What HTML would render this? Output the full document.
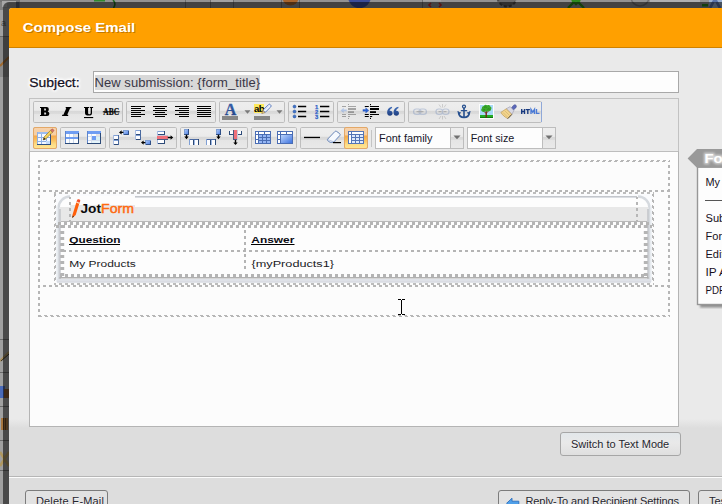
<!DOCTYPE html>
<html>
<head>
<meta charset="utf-8">
<title>Compose Email</title>
<style>
html,body{margin:0;padding:0;}
body{width:722px;height:504px;overflow:hidden;position:relative;background:#8b8b8b;font-family:"Liberation Sans",sans-serif;}
.abs{position:absolute;}
#frame{left:3px;top:2px;width:760px;height:560px;background:rgba(0,0,0,.54);border-radius:6px 0 0 0;}
#win{left:9px;top:8px;width:760px;height:560px;background:#eaeaea;border-radius:3px 0 0 0;overflow:hidden;}
#title{left:0;top:0;width:760px;height:39px;background:#ffa000;border-bottom:1px solid #cf8200;}
#title span{position:absolute;left:14px;top:11px;font-weight:bold;font-size:13px;color:#fff;text-shadow:1px 1px 1px rgba(120,70,0,.55);letter-spacing:.45px;white-space:nowrap;}
#lower{left:0;top:411px;width:760px;height:57px;background:linear-gradient(#eaeaea 0,#dddddd 9px,#dddddd 100%);}
#foot{left:0;top:468px;width:760px;height:60px;background:#dddddd;border-top:1px solid #b6b6b6;box-shadow:inset 0 1px 0 #fcfcfc;}
/* all below are in page coords */
#subjlbl{left:29px;top:74px;font-size:13px;color:#111;text-shadow:0 1px 0 #fff;letter-spacing:.55px;white-space:nowrap;}
#subj{left:93px;top:71px;width:584px;height:20px;border:1px solid #a8a8a8;background:#fdfdfd;}
#subj span{position:absolute;left:.5px;top:3px;height:15px;line-height:15px;padding:0;background:#d8d8d8;font-size:13px;color:#3a3646;white-space:nowrap;letter-spacing:.06px;}
#tb{left:29px;top:98px;width:648px;height:52px;border:1px solid #c2c2c2;background:#eaeaea;}
#ed{left:29px;top:151px;width:648px;height:274px;border:1px solid #b4b4b4;border-top:1px solid #bdbdbd;background:#fcfcfc;}
.grp{position:absolute;height:20px;border:1px solid #c6c6c6;border-radius:2px;background:linear-gradient(#ededed 0,#ececec 42%,#d9d9d9 46%,#dcdcdc 56%,#e6e6e6 60%,#e8e8e8 100%);}
.btn{position:absolute;width:22px;height:22px;}
.btn svg{position:absolute;left:1px;top:1px;}
</style>
</head>
<body>
<svg class="abs" style="left:0;top:0" width="722" height="504" viewBox="0 0 722 504">
<rect x="0" y="0" width="722" height="504" fill="#a0a0a0"/><rect x="0" y="0" width="722" height="8" fill="#929292"/>
<rect x="0" y="0" width="20" height="2" fill="#747474"/>
<rect x="0" y="2" width="3" height="8" fill="#808080"/>
<rect x="2" y="1" width="14" height="1.500" fill="#a8a8a8"/><rect x="2" y="1" width="5" height="6" fill="#a8a8a8"/><rect x="16" y="2" width="3.500" height="6" fill="#5a6070"/><text x="1" y="26" font-family="Liberation Sans, sans-serif" font-size="9" fill="#555">a</text>
<rect x="0" y="37" width="9" height="40" fill="#8a8a8a"/>
<!-- top strip bits -->
<rect x="94" y="0" width="11" height="1.500" fill="#2f8a2f"/>
<path d="M113 0c2.500 2.500 2.500 5 .5 8" stroke="#1f6a1f" stroke-width="1.600" fill="none"/>
<rect x="211" y="0" width="22" height="2" fill="#a2a2a2"/>
<rect x="422" y="0" width="19" height="1.500" fill="#a0a0a0"/>
<rect x="650" y="0" width="50" height="2" fill="#b0b0b0"/>
<g stroke="#6e6e6e" stroke-width="1"><path d="M185.500 0v8M210.500 0v8M233.500 0v8M281.500 0v8M299.500 0v8M422.500 0v8"/></g>
<circle cx="290.500" cy="-2.500" r="8" fill="#a8642c"/>
<circle cx="359.500" cy="-3.500" r="11.500" fill="#3c4c98"/>
<path d="M431 3l-2 2 2 2M439 3l2 2-2 2" stroke="#b83030" stroke-width="1.600" fill="none"/>
<circle cx="507" cy="-3" r="9.500" fill="#6a6a6a" stroke="#4a4a4a" stroke-width="2" stroke-dasharray="3 2"/>
<path d="M568 8l8-8 8 8M572 0l4 4 4-4" stroke="#2c8a1c" stroke-width="2.400" fill="none"/>
<circle cx="640" cy="-3" r="9" fill="none" stroke="#707070" stroke-width="1.500"/>
<rect x="702" y="4" width="6" height="2.500" fill="#2c8a1c"/>
<rect x="709" y="0" width="13" height="8" fill="#9ab0d0"/><path d="M710 8l5-9 5 9" stroke="#5a72a8" stroke-width="2.600" fill="none"/>
<!-- left strip bits -->
<path d="M0 66l9-9" stroke="#a06a30" stroke-width="2"/>
<path d="M0 361l9-9" stroke="#a89060" stroke-width="2.200"/>
<path d="M1 361l8-7" stroke="#3a3020" stroke-width="1"/>
<rect x="0" y="386" width="5" height="12" fill="#4a6ab8"/><rect x="4" y="389" width="5" height="9" fill="#8a5a30"/>
<rect x="1" y="418" width="7" height="12" fill="#a87840"/><path d="M3.500 418v12M5.500 418v12" stroke="#5a3a20" stroke-width=".8"/>
<path d="M0 452l9 14M0 466l9-14" stroke="#b09860" stroke-width="2.600"/>
<g stroke="#6a6a6a"><path d="M0 36.500h9M0 339.500h9M0 372.500h9M0 406.500h9M0 440.500h9M0 470.500h9"/></g>
</svg>

<div class="abs" id="frame"></div>
<div class="abs" id="win">
  <div class="abs" id="title"><svg style="position:absolute;left:0;top:0" width="200" height="39" viewBox="0 0 200 39"><text x="14.800" y="24.900" font-family="Liberation Sans, sans-serif" font-weight="bold" font-size="13.400" fill="#9a5a00" fill-opacity=".6" textLength="112.500" lengthAdjust="spacingAndGlyphs">Compose Email</text><text x="13.800" y="23.900" font-family="Liberation Sans, sans-serif" font-weight="bold" font-size="13.400" fill="#fff" textLength="112.500" lengthAdjust="spacingAndGlyphs">Compose Email</text></svg></div>
  <div class="abs" id="lower"></div>
  <div class="abs" id="foot"></div>
</div>
<svg class="abs" style="left:24px;top:70px" width="64" height="26" viewBox="24 70 64 26"><defs><filter id="wg" x="-20%" y="-30%" width="140%" height="160%"><feGaussianBlur stdDeviation=".8"/></filter></defs><text x="29.300" y="86.700" font-family="Liberation Sans, sans-serif" font-size="12.300" fill="#fff" stroke="#fff" stroke-width="2.400" filter="url(#wg)" textLength="50.300" lengthAdjust="spacingAndGlyphs">Subject:</text><text x="29.300" y="86.700" font-family="Liberation Sans, sans-serif" font-size="12.300" fill="#14101e" stroke="#14101e" stroke-width=".25" textLength="50.300" lengthAdjust="spacingAndGlyphs">Subject:</text></svg>
<div class="abs" id="subj"><span>New submission: {form_title}</span></div>
<div class="abs" id="tb"></div>
<div class="abs" id="ed"></div>
<svg class="abs" style="left:29px;top:98px" width="650" height="54" viewBox="29 98 650 54">
<defs>
<linearGradient id="gb" x1="0" y1="0" x2="0" y2="1">
<stop offset="0" stop-color="#eeeeee"/><stop offset=".42" stop-color="#ebebeb"/><stop offset=".46" stop-color="#d7d7d7"/><stop offset=".57" stop-color="#dbdbdb"/><stop offset=".62" stop-color="#e5e5e5"/><stop offset="1" stop-color="#e9e9e9"/>
</linearGradient>
<linearGradient id="ga" x1="0" y1="0" x2="0" y2="1">
<stop offset="0" stop-color="#f6d2ad"/><stop offset=".36" stop-color="#f8cf9f"/><stop offset=".40" stop-color="#f5a94a"/><stop offset=".60" stop-color="#f9bf5e"/><stop offset=".80" stop-color="#fddc85"/><stop offset="1" stop-color="#ffe694"/>
</linearGradient>
<linearGradient id="bl" x1="0" y1="0" x2="0" y2="1"><stop offset="0" stop-color="#3f6cb8"/><stop offset="1" stop-color="#1f3f80"/></linearGradient>
<linearGradient id="bc" x1="0" y1="0" x2="1" y2="1"><stop offset="0" stop-color="#bcd4fb"/><stop offset="1" stop-color="#3f74e0"/></linearGradient>
</defs>
<!-- groups row 1 -->
<g fill="url(#gb)" stroke="#bebebe">
<rect x="33.5" y="101.5" width="89" height="21" rx="1.200"/>
<rect x="126.5" y="101.5" width="89" height="21" rx="1.200"/>
<rect x="219.5" y="101.5" width="65" height="21" rx="1.200"/>
<rect x="288.5" y="101.5" width="45" height="21" rx="1.200"/>
<rect x="337.5" y="101.5" width="67" height="21" rx="1.200"/>
<rect x="408.5" y="101.5" width="133" height="21" rx="1.200"/>
<!-- row 2 -->
<rect x="33.5" y="127.5" width="23" height="21" rx="1.200"/>
<rect x="60.5" y="127.5" width="45" height="21" rx="1.200"/>
<rect x="109.5" y="127.5" width="67" height="21" rx="1.200"/>
<rect x="180.5" y="127.5" width="67" height="21" rx="1.200"/>
<rect x="251.5" y="127.5" width="45" height="21" rx="1.200"/>
<rect x="300.5" y="127.5" width="67" height="21" rx="1.200"/>
</g>
<!-- active buttons -->
<rect x="33.5" y="127.5" width="23" height="21" rx="1.5" fill="url(#ga)" stroke="#e3a868"/>
<rect x="344.5" y="127.5" width="23" height="21" rx="1.5" fill="url(#ga)" stroke="#e3a868"/>
<line x1="541.5" y1="102" x2="541.5" y2="122" stroke="#8fa8d8"/>
<line x1="371.5" y1="130" x2="371.5" y2="147" stroke="#c4c4c4"/>
<!-- selects -->
<g>
<rect x="375.5" y="127.5" width="88" height="21" fill="#fdfdfd" stroke="#bdbdbd"/>
<rect x="451" y="128" width="12" height="20" fill="url(#gb)"/>
<line x1="450.5" y1="128" x2="450.5" y2="148" stroke="#bdbdbd"/>
<path d="M453.5 135.5h7l-3.5 3.8z" fill="#707070"/>
<rect x="467.5" y="127.5" width="88" height="21" fill="#fdfdfd" stroke="#bdbdbd"/>
<rect x="543" y="128" width="12" height="20" fill="url(#gb)"/>
<line x1="542.5" y1="128" x2="542.5" y2="148" stroke="#bdbdbd"/>
<path d="M545.5 135.5h7l-3.5 3.8z" fill="#707070"/>
<text x="379" y="141.800" font-family="Liberation Sans, sans-serif" font-size="11.500" fill="#16162a" textLength="53.500" lengthAdjust="spacingAndGlyphs">Font family</text>
<text x="470.800" y="141.800" font-family="Liberation Sans, sans-serif" font-size="11.500" fill="#16162a" textLength="43.500" lengthAdjust="spacingAndGlyphs">Font size</text>
</g>
<!-- B I U ABC -->
<path fill-rule="evenodd" d="M40 107H46.600Q48.800 107 48.800 109.100V109.600Q48.800 111.100 47.600 111.500Q49.300 111.900 49.300 113.300V113.900Q49.300 116 47 116H40V114.900H41V108.100H40ZM44.200 108.500V110.600H45.500Q45.900 110.600 45.900 110.100V109Q45.900 108.500 45.500 108.500ZM44.200 112.400V114.500H45.700Q46.100 114.500 46.100 114V112.900Q46.100 112.400 45.700 112.400Z" fill="#000"/>
<path d="M65.700 107H71.300V108.200H70.100L67.200 114.800H68.200V116H62.100V114.800H63.400L66.300 108.200H65.700Z" fill="#000"/>
<path d="M84 107H89V108.100H88.100V113Q88.100 114.300 89.300 114.300Q90.700 114.300 90.700 113V108.100H89.800V107H93.100V108.100H92V113Q92 115.600 88.800 115.600Q85 115.600 85 113V108.100H84Z" fill="#000"/>
<rect x="84" y="117" width="9.200" height="1.100" fill="#000"/>
<text x="103.300" y="114.900" font-family="Liberation Serif, serif" font-weight="bold" font-size="9.500" fill="#000" stroke="#000" stroke-width=".2" textLength="15.800" lengthAdjust="spacingAndGlyphs">ABC</text>
<rect x="102.800" y="111.300" width="16.800" height="1" fill="#000"/>
<!-- align -->
<g fill="#000" shape-rendering="crispEdges">
<path d="M131 106h14v1h-14zM131 108h10v1h-10zM131 110h14v1h-14zM131 112h10v1h-10zM131 114h14v1h-14zM131 116h10v1h-10z"/>
<path d="M153 106h14v1h-14zM155 108h10v1h-10zM153 110h14v1h-14zM155 112h10v1h-10zM153 114h14v1h-14zM155 116h10v1h-10z"/>
<path d="M175 106h14v1h-14zM179 108h10v1h-10zM175 110h14v1h-14zM179 112h10v1h-10zM175 114h14v1h-14zM179 116h10v1h-10z"/>
<path d="M197 106h14v1h-14zM197 108h14v1h-14zM197 110h14v1h-14zM197 112h14v1h-14zM197 114h14v1h-14zM197 116h14v1h-14z"/>
</g>
<!-- forecolor -->
<text x="230.5" y="114.6" text-anchor="middle" font-family="Liberation Serif, serif" font-weight="bold" font-size="16" fill="url(#bl)" stroke="#2c509a" stroke-width=".3">A</text>
<rect x="222" y="116" width="16" height="4" fill="#878787"/>
<path d="M244.5 110.3h6l-3 3.4z" fill="#7a7a7a"/>
<!-- backcolor -->
<rect x="254" y="104" width="10" height="9" fill="#fdea5c"/>
<text x="254" y="112" font-family="Liberation Sans, sans-serif" font-weight="bold" font-size="9.600" letter-spacing="-.7" fill="#000">ab</text>
<g transform="translate(1.100 -.100) rotate(45 265.200 109.200)">
<rect x="263.600" y="103.200" width="3.200" height="9.400" rx="1.300" fill="#f2f7ff" stroke="#5878bc" stroke-width=".9"/>
<path d="M263.700 112.600h3l-1.500 3z" fill="#ecd29a" stroke="#8a6a30" stroke-width=".5"/>
<path d="M264.600 104.500v7" stroke="#c4d6f4" stroke-width=".9"/>
</g>
<rect x="254" y="116" width="16" height="4" fill="#878787"/>
<path d="M276.5 110.3h6l-3 3.4z" fill="#7a7a7a"/>
<!-- bullist -->
<g fill="#3f72c8" stroke="#24509c" stroke-width=".5">
<circle cx="294.5" cy="106.6" r="1.5"/><circle cx="294.5" cy="111.5" r="1.5"/><circle cx="294.5" cy="116.4" r="1.5"/>
</g>
<g stroke="#000" stroke-width="1.5">
<path d="M298 106.6h8.2M298 111.5h8.2M298 116.4h8.2"/>
<path d="M320 106.6h9.3M320 111.5h9.3M320 116.4h9.3"/>
</g>
<!-- numlist -->
<g font-family="Liberation Sans, sans-serif" font-weight="bold" font-size="5.800" fill="#2f62c8" stroke="#2f62c8" stroke-width=".25" text-anchor="middle">
<text x="316.600" y="108.700">1</text><text x="316.600" y="113.600">2</text><text x="316.600" y="118.500">3</text>
</g>
<!-- outdent (disabled) -->
<g opacity=".30" transform="translate(-1 0)">
<path d="M349.5 104v1M349.5 118v1" stroke="#000"/>
<path d="M343 106.5h4M349 106.5h8" stroke="#000" stroke-width="1"/>
<rect x="349" y="108" width="8" height="2" fill="#000"/>
<rect x="349" y="111.2" width="6" height="1.8" fill="#000"/>
<path d="M343 114.5h4M349 114.5h8M343 116.5h4M349 116.5h2" stroke="#000" stroke-width="1"/>
<path d="M341.5 110.4l3.2-2.6v1.7h3v1.8h-3v1.7z" fill="#3b78e0"/>
</g>
<!-- indent -->
<g>
<path d="M370.5 104v1.2M370.5 117.8v1.2" stroke="#000"/>
<path d="M364.8 106.5h4M370 106.5h9" stroke="#000" stroke-width="1"/>
<rect x="370" y="108" width="9" height="2" fill="#000"/>
<rect x="370" y="111.2" width="6" height="1.8" fill="#000"/>
<path d="M364.8 114.5h4M370 114.5h9M364.8 116.5h4M370 116.5h2.2" stroke="#000" stroke-width="1"/>
<path d="M368.9 110.4l-3.2-2.7v1.8h-2.8v1.8h2.8v1.8z" fill="#2a62d4" stroke="#1f4cae" stroke-width=".3"/>
</g>
<!-- blockquote -->
<g fill="url(#bl)">
<path d="M391.8 106.8c-3 .7-4.7 2.800-4.700 5.6 0 2 1.200 3.300 2.900 3.300 1.500 0 2.600-1.100 2.600-2.500 0-1.400-1-2.400-2.400-2.400-.2 0-.4 0-.6.100.2-1.300 1.100-2.300 2.600-3z"/>
<path d="M398.200 106.800c-3 .7-4.700 2.800-4.700 5.600 0 2 1.200 3.300 2.900 3.300 1.500 0 2.600-1.100 2.600-2.500 0-1.400-1-2.400-2.400-2.400-.2 0-.4 0-.6.100.2-1.300 1.100-2.300 2.600-3z"/>
</g>
<!-- link (disabled) -->
<g opacity=".30" fill="none" stroke="#5a78b0" stroke-width="1.200">
<rect x="413.6" y="109" width="7.4" height="5.4" rx="2.600"/>
<rect x="419" y="109" width="7.4" height="5.4" rx="2.600"/>
<path d="M416.500 111.700h7" stroke="#333" stroke-width="1"/>
</g>
<!-- unlink (disabled) -->
<g opacity=".30" fill="none" stroke="#5a78b0" stroke-width="1.200">
<rect x="436" y="109" width="6.6" height="5.4" rx="2.600"/>
<rect x="442.4" y="109" width="6.600" height="5.400" rx="2.600"/>
<path d="M438.500 111.700h3M443.500 111.700h3" stroke="#333" stroke-width="1"/>
<path d="M442.500 104v3.500M439 104.500l2 3M446 104.500l-2 3M442.500 119.500v-3.500M439 119l2-3M446 119l-2-3" stroke="#666" stroke-width=".8"/>
</g>
<!-- anchor -->
<g fill="none" stroke="#27508f" stroke-width="1.6" stroke-linecap="round">
<circle cx="464" cy="106.600" r="1.500" stroke-width="1.300"/>
<path d="M464 108.300v8.700"/>
<path d="M461.300 110.600h5.400" stroke-width="1.200"/>
<path d="M458.700 112.800c.3 3 2.400 4.600 5.300 4.600s5-1.600 5.300-4.600" stroke-width="1.800"/>
<path d="M458 111.400l.700 2.600 1.900-1.200M470 111.400l-.7 2.600-1.900-1.200" stroke-width="1" fill="#27508f"/>
</g>
<!-- image -->
<g>
<rect x="479" y="104" width="15" height="15" fill="#fdfdfd"/>
<rect x="480" y="105" width="13" height="10" fill="#a9daf8"/>
<rect x="480" y="115" width="13" height="3" fill="#25ad25"/>
<rect x="480" y="117" width="13" height="1" fill="#127a12"/>
<path d="M486.200 111v6.500" stroke="#7a1a10" stroke-width="1.300"/>
<path d="M486.300 113.500l-2.300-2M486.300 113l2.500-2" stroke="#7a1a10" stroke-width=".8"/>
<path d="M482 108.200c-1.200 1-1 2.800.3 3.200 1 .9 2.300.6 2.900-.2 1.300.7 2.500.6 3.200-.2 1.500.5 2.800-.4 2.700-1.700.8-1.200.2-2.600-1-2.800-.3-1.300-1.800-1.800-2.900-1.100-1-.9-2.700-.7-3.300.5-1.200-.1-2.200 1-1.900 2.300z" fill="#3aa82a"/>
<path d="M484 107.500c.8-.8 2-.8 2.700-.1M487.500 109.200c.8-.5 1.700-.4 2.300.2M483.200 110c.6-.4 1.300-.4 1.800 0" stroke="#1c7a18" stroke-width=".7" fill="none"/>
</g>
<!-- cleanup brush -->
<g>
<path d="M510.800 108.600l2.600-3.200c.7-.8 1.800-.9 2.500-.2.700.7.700 1.800 0 2.500l-3 2.900z" fill="#5b68b8" stroke="#3b478f" stroke-width=".5"/>
<path d="M506.200 108.800l4-2.200 3.700 3.800-2 4z" fill="#d8d8e4" stroke="#8a8aa0" stroke-width=".5"/>
<path d="M506.200 108.800l5.700 5.600-4 4.200c-2.800-1.200-5.600-3.600-7-6.200z" fill="#f1d48e" stroke="#b8924a" stroke-width=".6"/>
<path d="M503 112.500l4.800 4.800M504.800 110.800l4.800 4.800" stroke="#d4ae62" stroke-width=".6"/>
<path d="M507.800 118.600l4-4.200" stroke="#3a3a3a" stroke-width=".8"/>
</g>
<!-- html -->
<g fill="none" stroke-width="1.350" stroke-linejoin="miter">
<path d="M521.700 109v5M524.500 109v5M521.700 111.500h2.800M525.700 109.650h4.200M527.800 109v5" stroke="#17397f"/>
<path d="M531 114v-4.600l1.750 2.800 1.750-2.800v4.600M536.500 109v4.350h3" stroke="#4a7ad6"/>
</g>

<!-- table (active) with pencil -->
<g shape-rendering="crispEdges">
<rect x="37" y="132" width="14" height="13" fill="#f4f8ff"/>
<rect x="37" y="132" width="14" height="2" fill="#9cbcf0"/>
<path d="M37 132v13M41.500 134v11M46.500 134v11M37 137.500h14M37 141.500h14" stroke="#8fb0e4" fill="none"/>
<path d="M37 144.500h14M50.500 132v13" stroke="#2f4f82" fill="none"/>
<rect x="46" y="141" width="4" height="3" fill="#c6dcf8"/>
</g>
<path d="M50.600 130.300l1.900 1.800-6.700 6.800-2.600 1 .8-2.800z" fill="#f6d35a" stroke="#8a6a1a" stroke-width=".6"/>
<path d="M50.600 130.300l.9-.9c.5-.5 1.200-.5 1.700 0l.3.300c.5.500.5 1.200 0 1.600l-.9.900z" fill="#d8766a" stroke="#9a4a40" stroke-width=".5"/>
<path d="M43.200 139.900l.7-2.500 1.900 1.800z" fill="#222"/>
<!-- row props -->
<g shape-rendering="crispEdges">
<rect x="65" y="131" width="14" height="13" fill="#fbfdff"/>
<rect x="65" y="131" width="14" height="3" fill="#6f9df2"/>
<rect x="65" y="137" width="13" height="2" fill="#6f9df2"/>
<path d="M65.500 131v13" stroke="#5f86cc" fill="none"/>
<path d="M69.500 134v3M73.500 134v3M69.500 139v4M73.500 139v4" stroke="#c9d6ea" fill="none"/>
<path d="M65 143.500h14M78.500 133v11" stroke="#2c4a78" fill="none"/>
<rect x="74" y="134" width="4" height="3" fill="#e4e4e4"/>
</g>
<!-- cell props -->
<g shape-rendering="crispEdges">
<rect x="87" y="131" width="14" height="13" fill="#fbfdff"/>
<rect x="87" y="131" width="14" height="3" fill="#6f9df2"/>
<path d="M87.500 131v13" stroke="#5f86cc" fill="none"/>
<path d="M91.500 134v9M96.500 134v9M88 136.500h12M88 140.500h12" stroke="#d4deee" fill="none"/>
<rect x="92" y="136" width="4" height="4" fill="#6f9df2"/>
<rect x="96" y="137" width="4" height="3" fill="#d9f0f4"/>
<rect x="92" y="141" width="8" height="2" fill="#e4f4fa"/>
<rect x="96" y="134" width="4" height="2" fill="#e2e2e2"/>
<path d="M87 143.500h14M100.500 133v11" stroke="#2c4a78" fill="none"/>
</g>
<!-- row before -->
<g shape-rendering="crispEdges">
<rect x="113" y="135" width="6" height="5" fill="#fdfdff"/><rect x="113" y="140" width="6" height="5" fill="#fdfdff"/>
<path d="M113 135.500h6M113 140.500h6" stroke="#7f9fd4" fill="none"/>
<path d="M113 139.500h6M113 144.500h6" stroke="#2c4a78" fill="none"/><path d="M118.500 135v10" stroke="#4a6aa0" fill="none"/>
<path d="M113.500 135v10" stroke="#a9bce0" fill="none"/>
<rect x="123" y="130" width="6" height="5" fill="url(#bc)" stroke="none"/>
<path d="M123 134.500h6M128.500 130v5" stroke="#2f4f86" fill="none"/>
<path d="M123 130.500h6M123.500 130v5" stroke="#7f9fd4" fill="none"/>
</g>
<path d="M119 132.400l2.600-2.200v1.500h1.800v1.400h-1.800v1.500z" fill="#000"/>
<!-- row after -->
<g shape-rendering="crispEdges">
<rect x="135" y="130" width="6" height="5" fill="#fdfdff"/><rect x="135" y="135" width="6" height="5" fill="#fdfdff"/>
<path d="M135 130.500h6M135 135.500h6" stroke="#7f9fd4" fill="none"/>
<path d="M135 134.500h6M135 139.500h6" stroke="#2c4a78" fill="none"/><path d="M140.500 130v10" stroke="#4a6aa0" fill="none"/>
<path d="M135.500 130v10" stroke="#a9bce0" fill="none"/>
<rect x="145" y="140" width="6" height="5" fill="url(#bc)"/>
<path d="M145 144.500h6M150.500 140v5" stroke="#2f4f86" fill="none"/>
<path d="M145 140.500h6M145.500 140v5" stroke="#7f9fd4" fill="none"/>
</g>
<path d="M141 142.600l2.600-2.200v1.500h1.800v1.400h-1.800v1.500z" fill="#000"/>
<!-- delete row -->
<g shape-rendering="crispEdges">
<rect x="157" y="131" width="8" height="4" fill="#fdfdff"/><rect x="157" y="140" width="8" height="4" fill="#fdfdff"/>
<path d="M157 131.500h8M157 139.500h8" stroke="#7f9fd4" fill="none"/>
<path d="M157 134.500h8M157 143.500h8M164.500 131v4M164.500 140v4" stroke="#2c4a78" fill="none"/>
<path d="M157.500 131v13" stroke="#a9bce0" fill="none"/>
<rect x="157" y="136" width="11" height="3" fill="#f0707a"/>
<rect x="157" y="135" width="11" height="1" fill="#c8c8d8"/>
<rect x="157" y="139" width="11" height="1" fill="#4a5a80"/>
</g>
<path d="M173.200 137.500l-2.600-2.200v1.500h-2.800v1.400h2.800v1.500z" fill="#000"/>
<!-- col before -->
<g shape-rendering="crispEdges">
<rect x="184" y="129" width="5" height="6" fill="url(#bc)"/>
<path d="M184.500 129v6M184 129.500h5" stroke="#7f9fd4" fill="none"/>
<path d="M188.500 129v6M184 134.500h5" stroke="#2f4f86" fill="none"/>
<rect x="189" y="139" width="10" height="6" fill="#fdfdff"/>
<path d="M189 139.500h10" stroke="#4a68a0" fill="none"/>
<path d="M189.500 139v6" stroke="#7f9fd4" fill="none"/>
<path d="M193.500 140v5M198.500 139v6" stroke="#2c4a78" fill="none"/>
<path d="M194.500 140v5" stroke="#9db8e4" fill="none"/>
</g>
<path d="M186.500 139.200l-2.200-2.600h1.500v-1.800h1.400v1.800h1.500z" fill="#000"/>
<!-- col after -->
<g shape-rendering="crispEdges">
<rect x="216" y="129" width="5" height="6" fill="url(#bc)"/>
<path d="M216.500 129v6M216 129.500h5" stroke="#7f9fd4" fill="none"/>
<path d="M220.500 129v6M216 134.500h5" stroke="#2f4f86" fill="none"/>
<rect x="206" y="139" width="10" height="6" fill="#fdfdff"/>
<path d="M206 139.500h10" stroke="#4a68a0" fill="none"/>
<path d="M206.500 139v6" stroke="#7f9fd4" fill="none"/>
<path d="M210.500 140v5M215.500 139v6" stroke="#2c4a78" fill="none"/>
<path d="M211.500 140v5" stroke="#9db8e4" fill="none"/>
</g>
<path d="M218.500 139.200l-2.200-2.600h1.500v-1.800h1.400v1.800h1.500z" fill="#000"/>
<!-- delete col -->
<g shape-rendering="crispEdges">
<rect x="229" y="131" width="13" height="4" fill="#fdfdff"/>
<path d="M229.500 131v4M229 134.500h4M238 134.500h4" stroke="#2c4a78" fill="none"/>
<path d="M241.500 131v4" stroke="#2c4a78" fill="none"/>
<rect x="234" y="130" width="3" height="10" fill="#f0707a"/>
<path d="M233.500 130v10M233 139.500h5" stroke="#4a5a80" fill="none"/>
<path d="M237.500 130v10" stroke="#c8c8d8" fill="none"/>
</g>
<path d="M235.500 145l-2.200-2.600h1.500v-2.400h1.400v2.400h1.500z" fill="#000"/>
<!-- split cells -->
<g shape-rendering="crispEdges">
<rect x="255" y="131" width="16" height="13" fill="#4a6db4"/>
<rect x="256" y="132" width="2" height="2" fill="#fff"/><rect x="259" y="132" width="5" height="2" fill="#fff"/><rect x="265" y="132" width="5" height="2" fill="#fff"/>
<rect x="256" y="135" width="2" height="4" fill="#fff"/><rect x="256" y="140" width="2" height="3" fill="#fff"/>
<g fill="#95b6f4">
<rect x="259" y="135" width="3" height="2"/><rect x="263" y="135" width="3" height="2"/><rect x="267" y="135" width="3" height="2"/>
<rect x="259" y="138" width="3" height="2"/><rect x="263" y="138" width="3" height="2"/><rect x="267" y="138" width="3" height="2"/>
<rect x="259" y="141" width="3" height="2"/><rect x="263" y="141" width="3" height="2"/><rect x="267" y="141" width="3" height="2"/>
</g>
</g>
<!-- merge cells -->
<g shape-rendering="crispEdges">
<rect x="277" y="131" width="16" height="13" fill="#4a6db4"/>
<rect x="278" y="132" width="2" height="2" fill="#fff"/><rect x="281" y="132" width="5" height="2" fill="#fff"/><rect x="287" y="132" width="5" height="2" fill="#fff"/>
<rect x="278" y="135" width="2" height="4" fill="#fff"/><rect x="278" y="140" width="2" height="3" fill="#fff"/>
<rect x="281" y="135" width="11" height="8" fill="url(#bc)"/>
</g>
<!-- hr -->
<rect x="304" y="136.800" width="16" height="1.300" fill="#000"/>
<!-- eraser -->
<path d="M327.600 139.200l7.200-7.600c.5-.5 1.200-.6 1.800-.2l3 2.200c.6.500.7 1.300.2 1.900l-6.200 6.800h-3.600l-2.300-1.700c-.4-.4-.5-1-.1-1.400z" fill="#f6f9fe" stroke="#5877ae" stroke-width=".9"/>
<path d="M327.800 139.600l6.600 2.400 5.400-6.400" fill="none" stroke="#9db2d8" stroke-width=".7"/>
<rect x="333" y="142" width="8" height="1.200" fill="#000"/>
<!-- visualaid -->
<g shape-rendering="crispEdges">
<rect x="348" y="131" width="16" height="13" fill="#5575b6"/>
<rect x="349" y="132" width="2" height="2" fill="#fff"/><rect x="352" y="132" width="11" height="2" fill="#fff"/>
<rect x="349" y="135" width="2" height="8" fill="#fff"/>
<g fill="#dfe9fb">
<rect x="352" y="135" width="3" height="2"/><rect x="356" y="135" width="3" height="2"/><rect x="360" y="135" width="3" height="2"/>
<rect x="352" y="138" width="3" height="2"/><rect x="356" y="138" width="3" height="2"/><rect x="360" y="138" width="3" height="2"/>
<rect x="352" y="141" width="3" height="2"/><rect x="356" y="141" width="3" height="2"/><rect x="360" y="141" width="3" height="2"/>
</g>
</g>

</svg>

<svg class="abs" style="left:30px;top:153px" width="648" height="274" viewBox="30 153 648 274">
<defs>
<linearGradient id="hb" x1="0" y1="0" x2="1" y2="0"><stop offset="0" stop-color="#dfe3e9"/><stop offset="1" stop-color="#b9bdc4"/></linearGradient>
<linearGradient id="hbr" x1="1" y1="0" x2="0" y2="0"><stop offset="0" stop-color="#dfe3e9"/><stop offset="1" stop-color="#b9bdc4"/></linearGradient>
</defs>
<!-- outer table -->
<g stroke="#b6b6b6" stroke-width="1" stroke-dasharray="3 3" fill="none">
<path d="M38 160.500H670" stroke-dashoffset="5"/><path d="M39 161.500H669" stroke-dashoffset="1"/>
<path d="M38 316.500H670" stroke-dashoffset="5"/><path d="M39 315.500H669" stroke-dashoffset="1"/>
<path d="M38.500 160V317" stroke-dashoffset="1"/><path d="M39.500 161V316" stroke-dashoffset="2"/>
<path d="M668.500 161V316" stroke-dashoffset="2"/><path d="M669.500 160V317" stroke-dashoffset="1"/>
<path d="M43 190.500H668" stroke-dashoffset="0"/><path d="M43 191.500H668" stroke-dashoffset="0"/>
<path d="M43 285.500H668"/><path d="M43 286.500H668"/>
</g>
<!-- inner table -->
<rect x="56" y="194" width="596" height="89" fill="#fafbfd"/>
<g stroke="#b6b6b6" stroke-width="1" stroke-dasharray="3 3" fill="none">
<path d="M54 192.500H654" stroke-dashoffset="1" stroke="#bcbcbc"/><path d="M54 193.500H654" stroke-dashoffset="1" stroke="#bcbcbc"/>
<path d="M54 283.500H654" stroke-dashoffset="1" stroke="#bcbcbc"/><path d="M54 284.500H654" stroke-dashoffset="1" stroke="#bcbcbc"/>
<path d="M54.500 194V283"/><path d="M55.500 194V283" stroke-dashoffset="1"/>
<path d="M652.500 194V283" stroke-dashoffset="1"/><path d="M653.500 194V283"/>
</g>
<!-- header -->
<path d="M58 222V208a12 12 0 0 1 12-12H638a12 12 0 0 1 12 12V222z" fill="#fdfdfd"/>
<rect x="60" y="207" width="588" height="15" fill="#e8e8e8"/>
<rect x="70" y="196" width="65" height="9" fill="#fdfdfd"/><rect x="70" y="205" width="65" height="2" fill="#e8e8e8"/>
<path d="M58.500 282V208a11.500 11.500 0 0 1 11.500-11.500" fill="none" stroke="#d6dadf" stroke-width="2.400"/>
<path d="M649.500 282V208a11.500 11.500 0 0 0-11.500-11.500" fill="none" stroke="#d6dadf" stroke-width="2.400"/>
<path d="M60 209V280M648 209V280" stroke="#b9bcc2" stroke-width="1.200"/>
<path d="M135 196.500H637" stroke="#c3c6cb" stroke-width="1.200"/><path d="M135 197.500H637" stroke="#dadde2" stroke-width="1"/>
<path d="M56.800 206V282M651.200 206V282" stroke="#eef1f5" stroke-width="1.400"/>
<g stroke="#b6b6b6" stroke-width="1" stroke-dasharray="3 3" fill="none">
<path d="M69.500 197V221" stroke-dashoffset="1"/><path d="M70.500 197V221" stroke-dashoffset="1"/>
<path d="M636.500 197V221" stroke-dashoffset="1"/><path d="M637.500 197V221" stroke-dashoffset="1"/>
</g>
<!-- logo -->
<path d="M72.200 217.900l.5-3.700 3.900-12.600 3 .9-3.900 12.600z" fill="#ff5f0a"/>
<path d="M76.600 201.600l.5-1.700c.2-.6.800-.9 1.400-.7l1 .3c.6.200.9.800.7 1.400l-.5 1.700z" fill="#f4502a"/>
<path d="M76.400 202.300l3 .9" stroke="#ffe9d8" stroke-width="1.100"/>
<path d="M72.200 217.900l.4-2.400 1.500 1.100z" fill="#4a3020"/>
<text x="80.500" y="212.800" font-family="Liberation Sans, sans-serif" font-weight="bold" font-size="13.200" fill="#0a0a0a" textLength="20.500" lengthAdjust="spacingAndGlyphs">Jot</text>
<text x="101" y="212.800" font-family="Liberation Sans, sans-serif" font-weight="normal" stroke="#ff6a10" stroke-width=".45" font-size="13.200" fill="#ff6a10" textLength="33" lengthAdjust="spacingAndGlyphs">Form</text>
<!-- body -->
<rect x="61" y="222" width="586" height="57" fill="#fdfdfd"/>
<rect x="57" y="279" width="594" height="3.400" fill="#dfe2e8"/>
<rect x="57" y="281.600" width="594" height=".900" fill="#d2d5db"/>
<g stroke="#b4b4b4" fill="none">
<path d="M61 221.500H647" stroke="#b9b9b9"/>
<path d="M58 223.500H650" stroke-width="3" stroke-dasharray="3 3" stroke-dashoffset="0"/>
<path d="M56 226.500H652" stroke-width="3" stroke-dasharray="3 3" stroke-dashoffset="0"/>
<!-- left/right comb -->
<path d="M62.200 225V278" stroke-width="4" stroke-dasharray="3 3" stroke-dashoffset="0"/>
<path d="M645.800 225V278" stroke-width="4" stroke-dasharray="3 3" stroke-dashoffset="0"/>
<!-- bottom comb -->
<path d="M60 275.500H648" stroke-width="3" stroke-dasharray="3 3" stroke-dashoffset="1"/>
<path d="M59.500 277.800H648.500" stroke-width="1.500" stroke="#b0b0b0"/>
<!-- separators -->
<path d="M64 250.500H644" stroke-width="1" stroke-dasharray="3 3" stroke-dashoffset="1"/><path d="M64 251.500H644" stroke-width="1" stroke-dasharray="3 3" stroke-dashoffset="1"/>
<path d="M244.500 230V272" stroke-dasharray="3 3"/><path d="M245.500 230V272" stroke-dasharray="3 3"/>
</g>
<g font-family="Liberation Sans, sans-serif" font-size="9.700" fill="#0c0c14">
<text x="69.300" y="242.800" font-weight="bold" textLength="51.200" lengthAdjust="spacingAndGlyphs">Question</text>
<text x="251.300" y="242.800" font-weight="bold" textLength="43" lengthAdjust="spacingAndGlyphs">Answer</text>
<text x="69.300" y="266.900" fill="#1a1a24" textLength="66.500" lengthAdjust="spacingAndGlyphs">My Products</text>
<text x="251.500" y="266.900" fill="#1a1a24" textLength="82.500" lengthAdjust="spacingAndGlyphs">{myProducts1}</text>
</g>
<path d="M69 244.500H120M251 244.500H294.500" stroke="#000"/>
<!-- I-beam -->
<path d="M401.500 300V314M398 299.500h3M402 299.500h3M398 314.500h3M402 314.500h3" stroke="#000" stroke-width="1" shape-rendering="crispEdges"/>
</svg>

<svg class="abs" style="left:684px;top:146px" width="38" height="168" viewBox="684 146 38 168">
<defs><filter id="sh" x="-20%" y="-20%" width="140%" height="140%"><feGaussianBlur stdDeviation="1.300"/></filter>
<filter id="gl" x="-30%" y="-30%" width="160%" height="160%"><feGaussianBlur stdDeviation=".900"/></filter></defs>
<rect x="700" y="300" width="30" height="7.500" fill="#6f6f6f" opacity=".75" filter="url(#sh)"/>
<rect x="697.500" y="167" width="30" height="137.500" fill="#fdfdfd" stroke="#979797" stroke-width="1.400"/>
<path d="M687.600 158.500L697 149H730V167.800H697z" fill="#999999"/>
<text x="704.500" y="163" font-family="Liberation Sans, sans-serif" font-weight="bold" font-size="13" fill="#e2e2e2" stroke="#d4d4d4" stroke-width="2.600" filter="url(#gl)" textLength="24" lengthAdjust="spacingAndGlyphs">For</text>
<text x="704.500" y="163" font-family="Liberation Sans, sans-serif" font-weight="bold" font-size="13" fill="#ffffff" textLength="24" lengthAdjust="spacingAndGlyphs">For</text>
<g font-family="Liberation Sans, sans-serif" font-size="10" fill="#18101c">
<text x="705.500" y="186.300" textLength="14.500" lengthAdjust="spacingAndGlyphs">My</text>
<text x="705.500" y="221.500" textLength="29" lengthAdjust="spacingAndGlyphs">Subm</text>
<text x="705.500" y="239.500" textLength="25.800" lengthAdjust="spacingAndGlyphs">Form</text>
<text x="705.500" y="257.500" textLength="19" lengthAdjust="spacingAndGlyphs">Edit</text>
<text x="705.500" y="275.600" textLength="21.500" lengthAdjust="spacingAndGlyphs">IP A</text>
<text x="705.500" y="293.600" textLength="19.500" lengthAdjust="spacingAndGlyphs">PDF</text>
</g>
<path d="M705 200.500H730" stroke="#555"/>
</svg>

<style>
.b{position:absolute;box-sizing:border-box;border:1px solid #a6a6a6;border-radius:3px;background:linear-gradient(#e2e7ea 0,#e9e9e9 45%,#dfdfdf 100%);font-size:11px;color:#26262e;text-shadow:0 1px 0 #f4f4f4;white-space:nowrap;}
.b span{position:absolute;}
</style>
<div class="b" style="left:560px;top:432px;width:121px;height:24px;"><span style="left:10px;top:5px;letter-spacing:0">Switch to Text Mode</span></div>
<div class="b" style="left:25px;top:490px;width:83px;height:30px;border-color:#7c7c7c;background:#e2e2e2"><span style="left:10px;top:4px;letter-spacing:.15px">Delete E-Mail</span></div>
<div class="b" style="left:498px;top:490px;width:192px;height:30px;border-color:#7c7c7c;background:#e2e2e2"><span style="left:26.500px;top:4px;letter-spacing:-.1px">Reply-To and Recipient Settings</span>
<svg style="position:absolute;left:7px;top:6px" width="14" height="12" viewBox="0 0 14 12"><path d="M.6 6.300L6 1.200V4.200H12.800V8.400H6V11.400z" fill="#4f9fe8" stroke="#2b6fc0" stroke-width=".9"/></svg></div>
<div class="b" style="left:698px;top:490px;width:60px;height:30px;border-color:#7c7c7c;background:#e2e2e2"><span style="left:10px;top:4px">Test Email</span></div>

</body>
</html>
